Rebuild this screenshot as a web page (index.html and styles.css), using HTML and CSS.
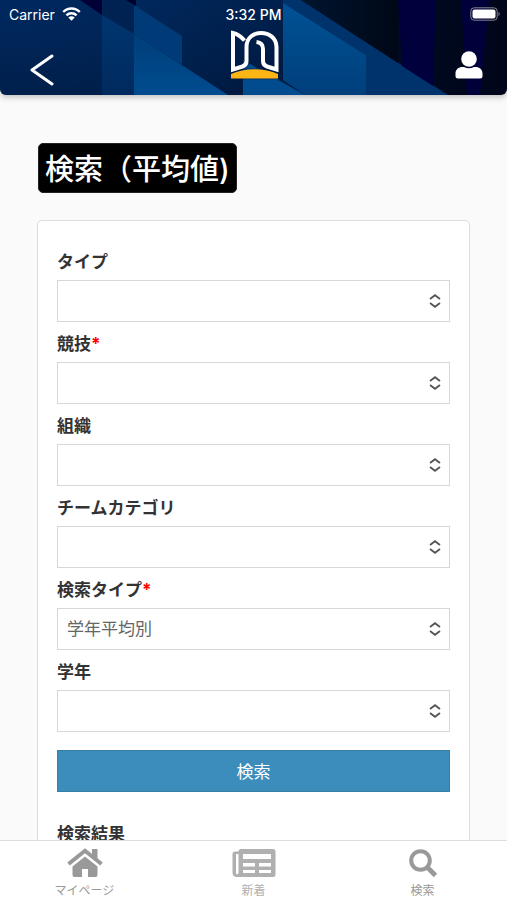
FILE: index.html
```html
<!DOCTYPE html>
<html lang="ja">
<head>
<meta charset="utf-8">
<meta name="viewport" content="width=device-width, initial-scale=1">
<title>検索（平均値)</title>
<link rel="stylesheet" href="styles.css">
</head>
<body>
<svg width="0" height="0" class="symbols" aria-hidden="true">
  <symbol id="updown" viewBox="0 0 14 14"><path d="M2 5l5-3.800L12 5M2 9l5 3.800L12 9" fill="none" stroke="#555" stroke-width="1.800"/></symbol>
</svg>
<header class="header">
  <svg class="header-art" viewBox="0 0 507 95" preserveAspectRatio="none" aria-hidden="true">
    <defs>
      <linearGradient id="base" x1="0" y1="0" x2="1" y2="0">
        <stop offset="0" stop-color="#00285c"/><stop offset=".3" stop-color="#002656"/><stop offset=".6" stop-color="#001a40"/><stop offset=".8" stop-color="#000a20"/><stop offset="1" stop-color="#00051a"/>
      </linearGradient>
      <linearGradient id="shade" x1="0" y1="0" x2="0" y2="1">
        <stop offset="0" stop-color="#002a66" stop-opacity=".3"/><stop offset="1" stop-color="#001233" stop-opacity=".4"/>
      </linearGradient>
      <linearGradient id="beam" x1="0" y1="0" x2="0" y2="1">
        <stop offset="0" stop-color="#003e78"/><stop offset="1" stop-color="#004c90"/>
      </linearGradient>
      <linearGradient id="strip" x1="0" y1="0" x2="0" y2="1">
        <stop offset="0" stop-color="#003670"/><stop offset="1" stop-color="#002a5e"/>
      </linearGradient>
      <linearGradient id="panel" x1="0" y1="0" x2="0" y2="1">
        <stop offset="0" stop-color="#005295"/><stop offset="1" stop-color="#003f7c"/>
      </linearGradient>
      <linearGradient id="night" x1="0" y1="0" x2="1" y2="0">
        <stop offset="0" stop-color="#00152f"/><stop offset="1" stop-color="#000716"/>
      </linearGradient>
    </defs>
    <rect width="507" height="95" fill="url(#base)"/>
    <rect width="283" height="95" fill="url(#shade)"/>
    <path d="M80 0h22v15z" fill="#000036"/>
    <path d="M102 0h26l6 5v29l-32-19z" fill="#002252"/>
    <path d="M126 0h10v6z" fill="#00002c"/>
    <path d="M102 15l32 19v61h-32z" fill="url(#strip)"/>
    <path d="M134 34l94 61h-94z" fill="url(#beam)"/>
    <path d="M134 5l48 31v29l-48-31z" fill="#003b78"/>
    <path d="M243 60l62 35h-62z" fill="#004c8e"/>
    <path d="M283 0h18l147 95h-82V55L283 3z" fill="#00326b"/>
    <path d="M283 3l83 52v40h-61l-22-15z" fill="url(#panel)"/>
    <path d="M301 0h97v63z" fill="url(#night)"/>
    <path d="M398 0h38l-3 86-31-20z" fill="#00003c"/>
    <path d="M461 0h28l-9 95h-13z" fill="#00003a"/>
  </svg>
  <div class="status">
    <span class="carrier">Carrier
      <svg width="19" height="14" viewBox="0 0 19 14" aria-hidden="true"><g fill="none" stroke="#fff" stroke-width="2.400"><path d="M1.200 5a11.700 11.700 0 0 1 16.600 0"/><path d="M4.400 8.400a7.200 7.200 0 0 1 10.200 0"/></g><path d="M6.300 10.500a4.500 4.500 0 0 1 6.400 0l-3.200 3.300z" fill="#fff"/></svg>
    </span>
    <span class="clock">3:32 PM</span>
    <svg class="battery" width="31" height="14" viewBox="0 0 31 14" aria-hidden="true"><rect x=".8" y=".8" width="26.400" height="12.400" rx="3.400" fill="none" stroke="#85858d"/><rect x="2.500" y="2.500" width="23" height="9" rx="2" fill="#fff"/><path d="M28.500 5v4c1.600-.6 1.600-3.400 0-4z" fill="#85858d"/></svg>
  </div>
  <div class="toolbar">
    <button class="icon-button back" type="button" aria-label="戻る"><svg width="24" height="32" viewBox="0 0 24 32"><path d="M22 2L2 16l20 14" fill="none" stroke="#fff" stroke-width="3" stroke-linecap="round" stroke-linejoin="round"/></svg></button>
    <svg class="logo" width="50" height="50" viewBox="0 0 50 50" aria-hidden="true">
      <path d="M1 48.500V44C14 37.500 35 37.500 48 44v4.500z" fill="#fdb515"/>
      <path d="M14.500 10.500C11 6.500 8 4 3 3v36.500l9.500-3c3-1 4-2.500 4-5.500V17C16.500 8 23 3 31 3s15.500 5 15.500 14v22.500l-9.500-3c-3-1-4-2.500-4-5.500V19c0-4-2-6.500-6.500-7" fill="none" stroke="#fff" stroke-width="4"/>
    </svg>
    <button class="icon-button account" type="button" aria-label="アカウント"><svg width="28" height="28" viewBox="0 0 28 28"><circle cx="14" cy="8" r="7.800" fill="#fff"/><path d="M.5 25v-2.500c0-4 3-6.500 7-6.500h1.500c3 1.700 7 1.700 10 0h1.500c4 0 7 2.500 7 6.500V25q0 2.500-2.500 2.500H3Q.5 27.500.5 25z" fill="#fff"/></svg></button>
  </div>
</header>
<main class="content">
  <h1 class="title">検索（平均値)</h1>
  <section class="card">
    <form class="form">
      <label for="type">タイプ</label>
      <div class="select"><select id="type"><option></option></select><svg><use href="#updown"/></svg></div>
      <label for="sport">競技<span class="required">*</span></label>
      <div class="select"><select id="sport"><option></option></select><svg><use href="#updown"/></svg></div>
      <label for="org">組織</label>
      <div class="select"><select id="org"><option></option></select><svg><use href="#updown"/></svg></div>
      <label for="team">チームカテゴリ</label>
      <div class="select"><select id="team"><option></option></select><svg><use href="#updown"/></svg></div>
      <label for="search-type">検索タイプ<span class="required">*</span></label>
      <div class="select"><select id="search-type"><option>学年平均別</option></select><svg><use href="#updown"/></svg></div>
      <label for="grade">学年</label>
      <div class="select"><select id="grade"><option></option></select><svg><use href="#updown"/></svg></div>
      <button class="submit" type="button">検索</button>
    </form>
    <h2 class="results">検索結果</h2>
  </section>
</main>
<nav class="tabs">
  <a href="#mypage"><svg width="36" height="30" viewBox="0 0 36 30" aria-hidden="true"><path d="M1.500 16L18 2.800 34.500 16" fill="none" stroke="#999" stroke-width="4"/><path d="M25 1h5.500v11L25 7.500zM18 8.500l12.500 10v8.500q0 2-2 2H21v-8h-6v8H7.500q-2 0-2-2v-8.500z" fill="#999"/></svg>マイページ</a>
  <a class="news" href="#news"><svg width="44" height="30" viewBox="0 0 44 30" aria-hidden="true"><path fill-rule="evenodd" d="M9 1h32q2.500 0 2.500 2.500v23q0 2.500-2.500 2.500H5q-4.500 0-4.500-4.500V6q0-2.500 2.500-2.500h3.500Q6.500 1 9 1zM4 6v19q0 1.300 1.200 1.300t1.300-1.300V6zM11 6v5h28V6zM11 15v3.500h12V15zM27 15v3.500h12V15zM11 22v3h12v-3zM27 22v3h12v-3z" fill="#b0b0b0"/></svg>新着</a>
  <a href="#search"><svg width="30" height="30" viewBox="0 0 30 30" aria-hidden="true"><circle cx="12.500" cy="12.500" r="9.300" fill="none" stroke="#999" stroke-width="4"/><path d="M19.500 19.500l8 8" stroke="#999" stroke-width="4.600"/></svg>検索</a>
</nav>
</body>
</html>
```
FILE: styles.css
```css
* { box-sizing: border-box; }

body {
  margin: 0;
  height: 100vh;
  display: flex;
  flex-direction: column;
  overflow: hidden;
  background: #fafafa;
  color: #333;
  font-family: Inter, "Noto Sans CJK JP", sans-serif;
}

.symbols { position: absolute; }

.header {
  position: relative;
  z-index: 1;
  flex: none;
  color: #fff;
  border-radius: 0 0 6px 6px;
  box-shadow: 0 2px 6px rgba(0, 0, 0, .25);
}

.header-art {
  position: absolute;
  inset: 0;
  width: 100%;
  height: 100%;
  border-radius: 0 0 6px 6px;
}

.status {
  position: relative;
  display: grid;
  grid-template-columns: 1fr auto 1fr;
  align-items: center;
  height: 28px;
  padding: 0 6px;
  font-size: 14px;
}

.carrier {
  display: flex;
  align-items: center;
  gap: 7px;
  padding-left: 3px;
}

.clock { font-weight: 500; }

.battery { justify-self: end; }

.toolbar {
  position: relative;
  display: flex;
  justify-content: space-between;
  align-items: flex-start;
  height: 67px;
  padding: 2px 24px 0 30px;
}

.icon-button {
  display: flex;
  padding: 0;
  border: 0;
  background: none;
}

.back { margin-top: 24px; }

.account { margin-top: 21px; }

.logo { filter: drop-shadow(0 0 1px #001a44); }

.content {
  flex: 1;
  min-height: 0;
  overflow: hidden;
  padding: 48px 37px 0;
}

.title {
  width: fit-content;
  margin: 0 0 27px 1px;
  padding: 4px 6px 0;
  border: 1px solid #222;
  border-radius: 5px;
  background: #000;
  color: #fff;
  font-size: 29px;
  font-weight: 500;
  line-height: 44px;
}

.card {
  padding: 19px;
  border: 1px solid #ddd;
  border-radius: 5px;
  background: #fff;
}

.form {
  display: flex;
  flex-direction: column;
}

label {
  padding-top: 4px;
  font-size: 17px;
  font-weight: 700;
  line-height: 36px;
}

.required { color: #f00; }

.select { position: relative; }

.select svg {
  position: absolute;
  top: 14px;
  right: 8px;
  width: 14px;
  height: 14px;
  pointer-events: none;
}

select {
  display: block;
  width: 100%;
  height: 42px;
  padding: 0 36px 0 9px;
  border: 1px solid #d5d8da;
  border-radius: 0;
  background: #fff;
  color: #666;
  font: 17px Inter, "Noto Sans CJK JP", sans-serif;
  appearance: none;
}

.submit {
  height: 42px;
  margin-top: 18px;
  padding: 0 0 2px;
  border: 1px solid #367fa9;
  background: #3c8dbc;
  color: #fff;
  font: 17px Inter, "Noto Sans CJK JP", sans-serif;
}

.results {
  margin: 28px 0 0;
  font-size: 17px;
  font-weight: 700;
  line-height: 28px;
}

.tabs {
  flex: none;
  display: grid;
  grid-template-columns: repeat(3, 1fr);
  height: 60px;
  padding-top: 7px;
  border-top: 1px solid #ddd;
  background: #fff;
}

.tabs a {
  display: flex;
  flex-direction: column;
  align-items: center;
  gap: 4px;
  color: #999;
  font-size: 12px;
  line-height: 18px;
  text-decoration: none;
}

.tabs .news { color: #b0b0b0; }
```
